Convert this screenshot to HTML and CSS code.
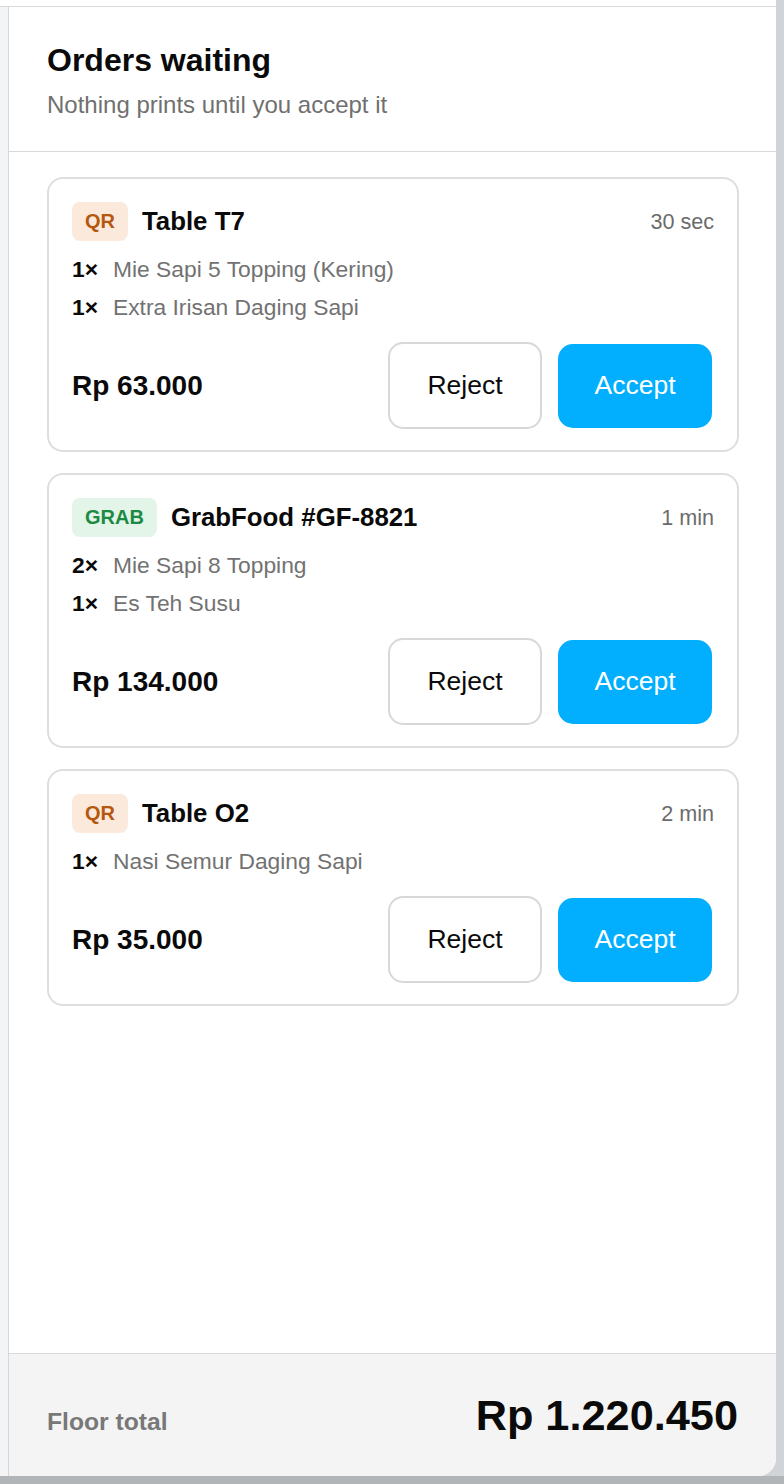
FILE: index.html
```html
<!DOCTYPE html>
<html lang="en">
<head>
<meta charset="utf-8">
<title>Orders waiting</title>
<link rel="stylesheet" href="styles.css">
</head>
<body>
<div class="screen">
  <div class="topgap"></div>
  <div class="stage">
    <div class="side"></div>
    <div class="panel">
      <header class="panel-head">
        <h1 class="title">Orders waiting</h1>
        <p class="subtitle">Nothing prints until you accept it</p>
      </header>
      <div class="list">
        <article class="card">
          <div class="card-head">
            <span class="badge badge-qr">QR</span>
            <span class="card-title">Table T7</span>
            <span class="time">30 sec</span>
          </div>
          <ul class="items">
            <li class="item"><span class="qty">1×</span><span class="name">Mie Sapi 5 Topping (Kering)</span></li>
            <li class="item"><span class="qty">1×</span><span class="name">Extra Irisan Daging Sapi</span></li>
          </ul>
          <div class="card-foot">
            <span class="price">Rp 63.000</span>
            <div class="actions">
              <button class="btn btn-reject">Reject</button>
              <button class="btn btn-accept">Accept</button>
            </div>
          </div>
        </article>
        <article class="card">
          <div class="card-head">
            <span class="badge badge-grab">GRAB</span>
            <span class="card-title">GrabFood #GF-8821</span>
            <span class="time">1 min</span>
          </div>
          <ul class="items">
            <li class="item"><span class="qty">2×</span><span class="name">Mie Sapi 8 Topping</span></li>
            <li class="item"><span class="qty">1×</span><span class="name">Es Teh Susu</span></li>
          </ul>
          <div class="card-foot">
            <span class="price">Rp 134.000</span>
            <div class="actions">
              <button class="btn btn-reject">Reject</button>
              <button class="btn btn-accept">Accept</button>
            </div>
          </div>
        </article>
        <article class="card">
          <div class="card-head">
            <span class="badge badge-qr">QR</span>
            <span class="card-title">Table O2</span>
            <span class="time">2 min</span>
          </div>
          <ul class="items">
            <li class="item"><span class="qty">1×</span><span class="name">Nasi Semur Daging Sapi</span></li>
          </ul>
          <div class="card-foot">
            <span class="price">Rp 35.000</span>
            <div class="actions">
              <button class="btn btn-reject">Reject</button>
              <button class="btn btn-accept">Accept</button>
            </div>
          </div>
        </article>
      </div>
      <footer class="panel-foot">
        <span class="foot-label">Floor total</span>
        <span class="foot-total">Rp 1.220.450</span>
      </footer>
    </div>
  </div>
  <div class="floor"></div>
</div>
</body>
</html>
```
FILE: styles.css
```css
* { box-sizing: border-box; }
html, body { margin: 0; padding: 0; }
body {
  font-family: "Liberation Sans", Arial, Helvetica, sans-serif;
  color: #0a0a0a;
  background: #ffffff;
}
.screen {
  width: 784px;
  height: 1484px;
  display: flex;
  flex-direction: column;
  background: #d0d3d7;
  overflow: hidden;
}
.topgap {
  height: 7px;
  flex: none;
  background: #ffffff;
  border-bottom: 1px solid #dadada;
  margin-right: 8px;
}
.stage {
  flex: 1;
  display: flex;
  padding-right: 8px;
  min-height: 0;
}
.side {
  width: 9px;
  flex: none;
  background: #f3f4f6;
  border-right: 1px solid #d6d6d6;
}
.panel {
  flex: 1;
  display: flex;
  flex-direction: column;
  background: #ffffff;
  border-bottom-right-radius: 18px;
  overflow: hidden;
}
.panel-head {
  padding: 34px 38px 31px 38px;
  border-bottom: 1px solid #d9d9d9;
}
.title {
  margin: 0 0 12px 0;
  font-size: 32px;
  line-height: 1.2;
  font-weight: 700;
  color: #0a0a0a;
}
.subtitle {
  margin: 0;
  font-size: 24px;
  line-height: 1.2;
  color: #707070;
}
.list {
  flex: 1;
  padding: 25px 37px 0 38px;
  display: flex;
  flex-direction: column;
  gap: 21px;
}
.card {
  border: 2px solid #dedede;
  border-radius: 16px;
  padding: 23px 25px 21px 23px;
}
.card-head {
  display: flex;
  align-items: center;
  height: 39px;
}
.badge {
  height: 39px;
  padding: 0 13px;
  border-radius: 8px;
  display: flex;
  align-items: center;
  font-size: 20px;
  font-weight: 700;
}
.badge-qr { background: #fbeadc; color: #b5570e; }
.badge-grab { background: #e3f5e8; color: #1b8a42; }
.card-title {
  margin-left: 14px;
  font-size: 25.8px;
  font-weight: 700;
  color: #0a0a0a;
}
.time {
  margin-left: auto;
  margin-right: -2px;
  font-size: 21.6px;
  color: #6b6b6b;
}
.items {
  list-style: none;
  margin: 9px 0 0 0;
  padding: 0;
}
.item {
  height: 38px;
  display: flex;
  align-items: center;
  font-size: 22.8px;
}
.qty {
  font-weight: 700;
  color: #0a0a0a;
  margin-right: 15px;
}
.name { color: #727272; }
.card-foot {
  margin-top: 16px;
  display: flex;
  align-items: center;
  justify-content: space-between;
}
.price {
  font-size: 28px;
  font-weight: 700;
  color: #0a0a0a;
}
.actions {
  display: flex;
  align-items: center;
  gap: 16px;
}
.btn {
  font-family: inherit;
  font-size: 26.5px;
  width: 154px;
  border-radius: 15px;
  cursor: pointer;
}
.btn-reject {
  height: 87px;
  background: #ffffff;
  border: 2px solid #d8d8d8;
  color: #0a0a0a;
}
.btn-accept {
  height: 84px;
  background: #02affe;
  border: none;
  color: #ffffff;
}
.panel-foot {
  border-top: 1px solid #d9d9d9;
  background: #f4f4f4;
  padding: 40px 38px 39px 38px;
  display: flex;
  align-items: baseline;
  justify-content: space-between;
}
.foot-label {
  font-size: 24.7px;
  font-weight: 700;
  color: #787878;
}
.foot-total {
  font-size: 43.3px;
  line-height: 1;
  font-weight: 700;
  color: #0a0a0a;
}
.floor {
  height: 8px;
  flex: none;
  background: #b2b5b8;
}
```
